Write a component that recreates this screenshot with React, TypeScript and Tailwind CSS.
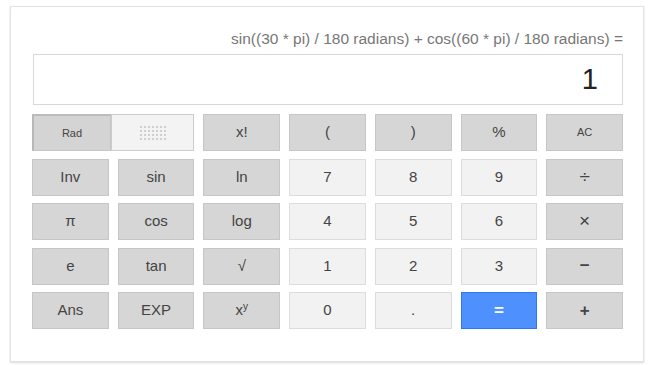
import React from "react";

type Kind = "fn" | "num" | "eq";

type Key = { label: React.ReactNode; kind: Kind; small?: boolean; bold?: boolean; op?: boolean };

const keys: Key[] = [
  { label: "x!", kind: "fn" },
  { label: "(", kind: "fn" },
  { label: ")", kind: "fn" },
  { label: "%", kind: "fn" },
  { label: "AC", kind: "fn", small: true },
  { label: "Inv", kind: "fn" },
  { label: "sin", kind: "fn" },
  { label: "ln", kind: "fn" },
  { label: "7", kind: "num" },
  { label: "8", kind: "num" },
  { label: "9", kind: "num" },
  { label: "÷", kind: "fn", op: true },
  { label: "π", kind: "fn" },
  { label: "cos", kind: "fn" },
  { label: "log", kind: "fn" },
  { label: "4", kind: "num" },
  { label: "5", kind: "num" },
  { label: "6", kind: "num" },
  { label: "×", kind: "fn", op: true },
  { label: "e", kind: "fn" },
  { label: "tan", kind: "fn" },
  { label: "√", kind: "fn" },
  { label: "1", kind: "num" },
  { label: "2", kind: "num" },
  { label: "3", kind: "num" },
  { label: "−", kind: "fn", bold: true },
  { label: "Ans", kind: "fn" },
  { label: "EXP", kind: "fn" },
  {
    label: (
      <span>
        x<sup className="text-[10px]">y</sup>
      </span>
    ),
    kind: "fn",
  },
  { label: "0", kind: "num" },
  { label: ".", kind: "num" },
  { label: "=", kind: "eq", bold: true },
  { label: "+", kind: "fn", bold: true },
];

const styles: Record<Kind, string> = {
  fn: "bg-[#d6d6d6] border-[#c6c6c6] text-[#444]",
  num: "bg-[#f2f2f2] border-[#dcdcdc] text-[#444]",
  eq: "bg-[#4d90fe] border-[#3079ed] text-white",
};

const CalcKey = ({ k }: { k: Key }) => {
  let size = "text-[15px]";
  if (k.small) size = "text-[11px]";
  if (k.op) size = "text-[19px] text-[#333]";
  if (k.bold) size = "font-bold text-[17px]";
  return (
    <button className={`h-[37px] border flex items-center justify-center ${styles[k.kind]} ${size}`}>
      {k.label}
    </button>
  );
};

const Dots = () => (
  <div className="grid grid-cols-7 gap-[2px]">
    {Array.from({ length: 28 }).map((_, i) => (
      <span key={i} className="w-[2px] h-[2px] bg-[#cfcfcf]" />
    ))}
  </div>
);

export default function App() {
  return (
    <div className="bg-white w-[652px] h-[365px] pt-[6px] pl-[10px] font-['Liberation_Sans',Arial,sans-serif]">
      <div className="w-[634px] h-[356px] border border-[#e2e2e2] shadow-[0_1px_2px_rgba(0,0,0,0.15)] pl-[21px] pr-[20px] pt-[24px]">
        <div className="text-right text-[15.5px] text-[#777] h-[16px] leading-[16px] whitespace-nowrap">
          sin((30 * pi) / 180 radians) + cos((60 * pi) / 180 radians) =
        </div>
        <div className="mt-[7px] ml-[1px] h-[51px] border border-[#d8d8d8] flex items-center justify-end pr-[24px] text-[29px] text-[#222]">
          1
        </div>
        <div className="mt-[9px] grid grid-cols-7 gap-x-[9px] gap-y-[7.5px]">
          <div className="col-span-2 flex h-[37px]">
            <button className="w-[79px] h-full bg-[#d4d4d4] border border-[#c6c6c6] border-l-2 border-t-2 border-l-[#b8b8b8] border-t-[#bcbcbc] text-[11px] text-[#444]">
              Rad
            </button>
            <div className="flex-1 h-full bg-[#f3f3f3] border border-[#cccccc] flex items-center justify-center">
              <Dots />
            </div>
          </div>
          {keys.map((k, i) => (
            <CalcKey key={i} k={k} />
          ))}
        </div>
      </div>
    </div>
  );
}
